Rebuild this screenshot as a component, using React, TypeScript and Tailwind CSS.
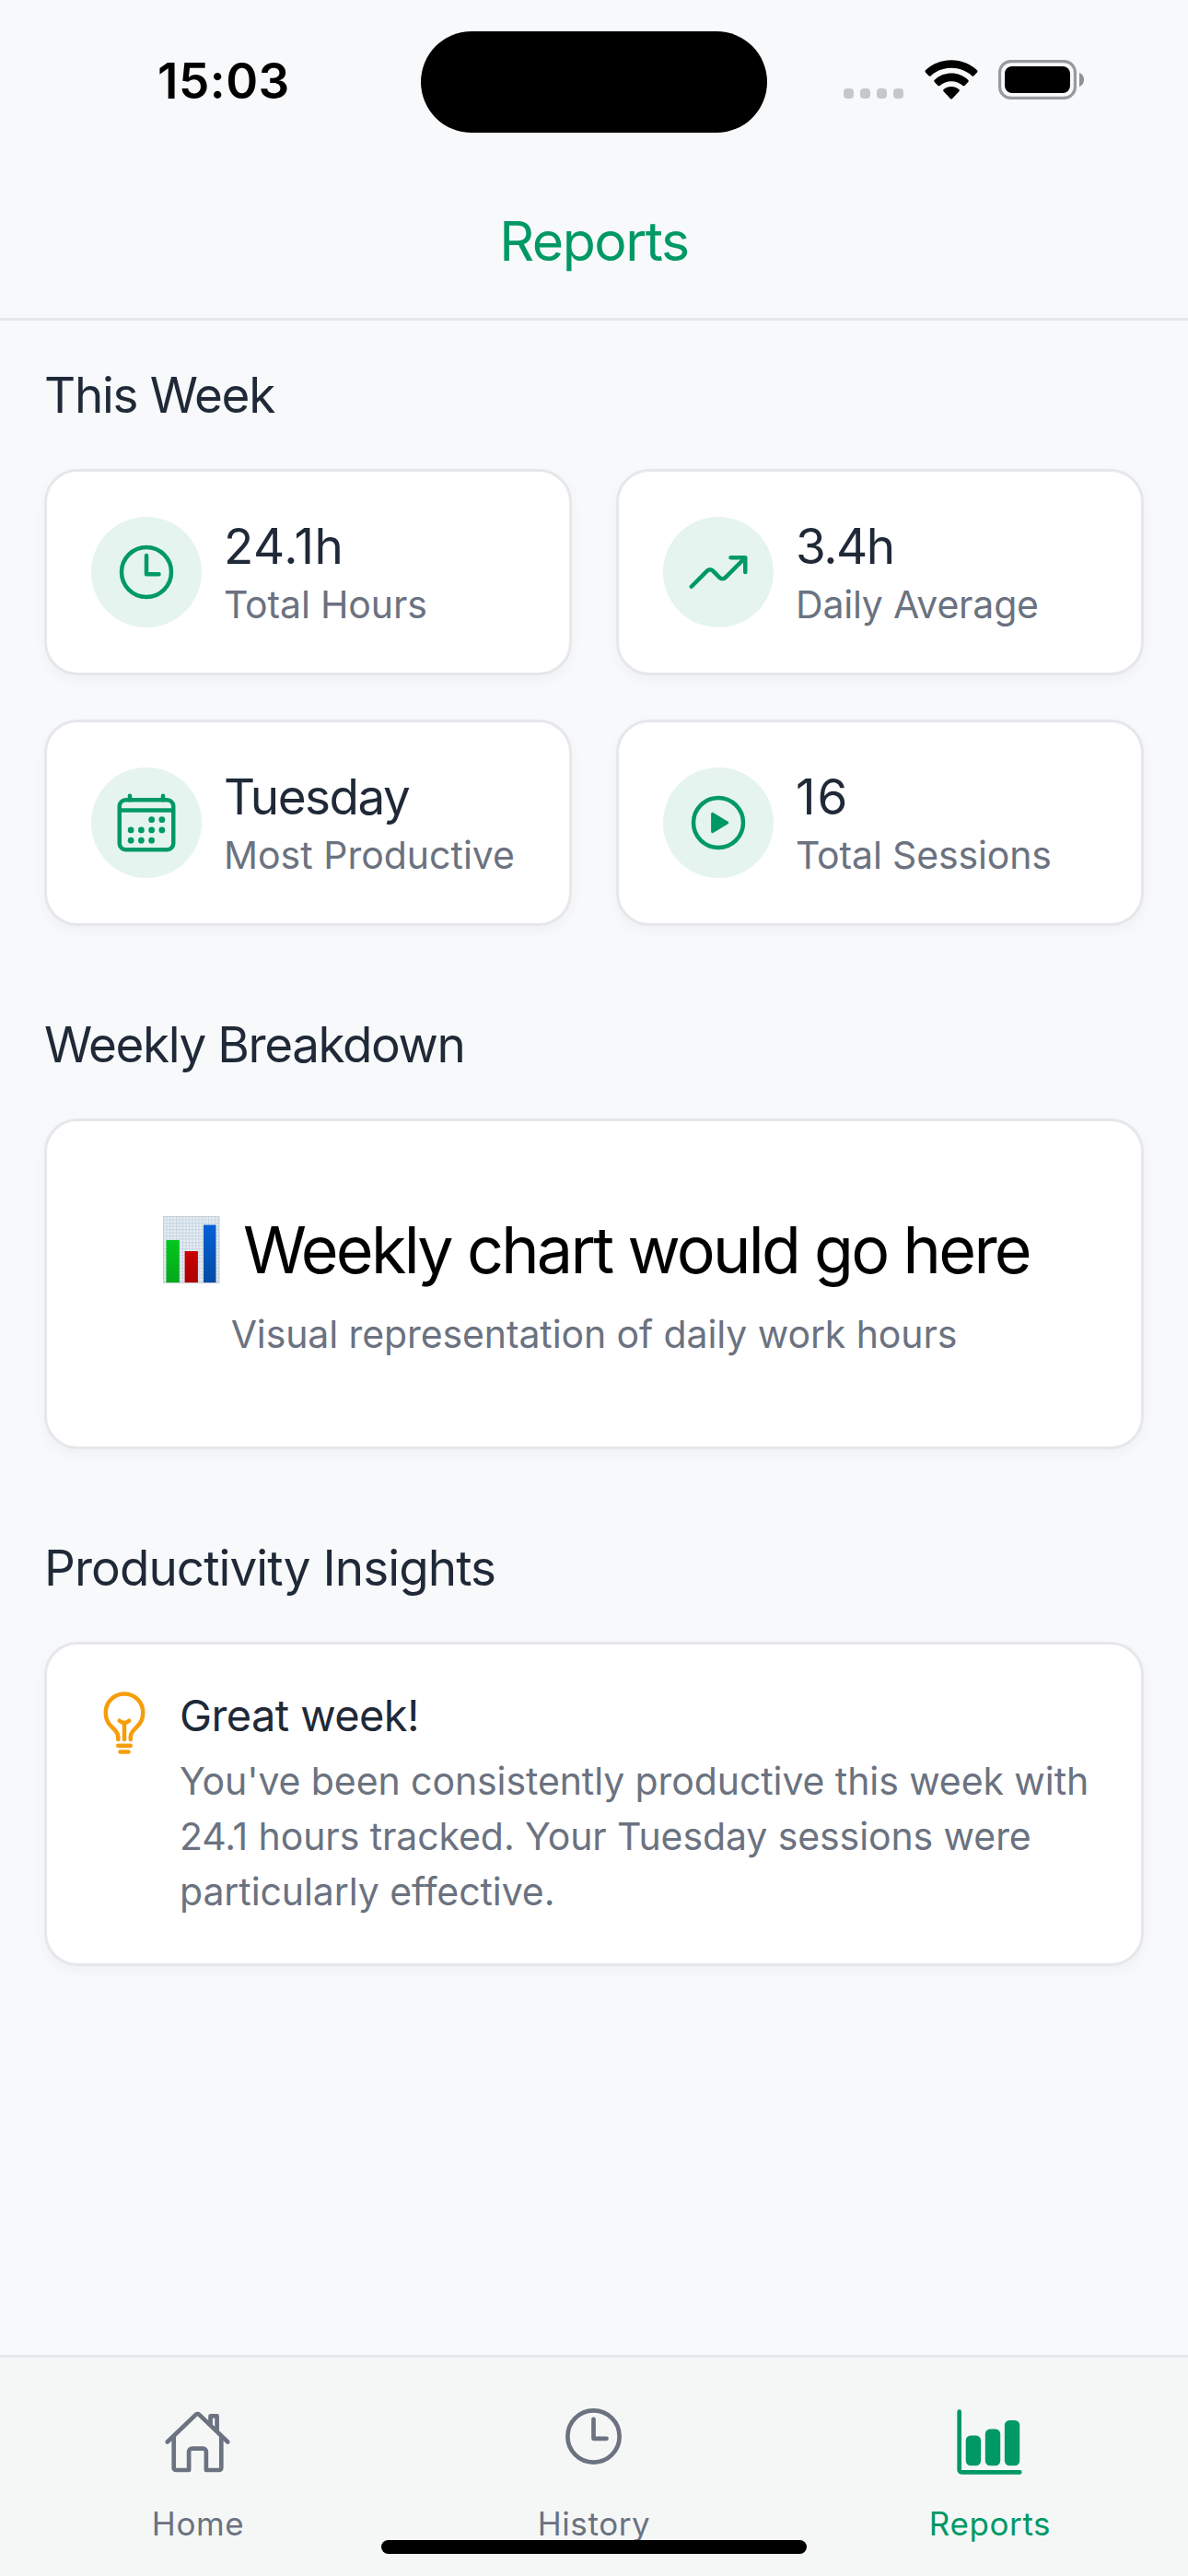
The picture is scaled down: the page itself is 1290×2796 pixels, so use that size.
import type { ReactNode } from "react";
import type { IconType } from "react-icons";
import {
  IoBarChart,
  IoBulbOutline,
  IoCalendarOutline,
  IoHomeOutline,
  IoPlayCircleOutline,
  IoTimeOutline,
  IoTrendingUpOutline,
} from "react-icons/io5";

const CARD =
  "rounded-[36px] border-[3px] border-[#e5e7eb] bg-white shadow-[0_5px_14px_rgba(0,0,0,0.04)]";

function WifiIcon() {
  return (
    <svg width="58" height="43" viewBox="0 0 58 43" fill="#000">
      <path d="M29 0.3C40 0.3 50 4.600 57 11.200c.7.700.7 1.500.1 2.200l-3.600 3.900c-.6.600-1.400.600-2 .1C45.500 11.800 37.500 8.800 29 8.800S12.500 11.800 6.500 17.400c-.6.500-1.400.500-2-.1L.9 13.400c-.6-.7-.6-1.500.1-2.200C8 4.600 18 .3 29 .3z" />
      <path d="M29 14.600c7.100 0 13.500 2.700 18.200 7.200.7.700.7 1.500.1 2.200l-3.800 3.900c-.6.600-1.400.6-2 .1C38 25 33.700 23.300 29 23.300S20 25 16.500 28c-.6.500-1.400.5-2-.1L10.700 24c-.6-.7-.6-1.500.1-2.200 4.700-4.500 11.100-7.200 18.200-7.200z" />
      <path d="M29 29c3.200 0 6.100 1.200 8.300 3.100.7.600.7 1.500.1 2.100l-7.300 7.700c-.6.700-1.600.7-2.200 0l-7.300-7.700c-.6-.6-.6-1.500.1-2.100C22.900 30.200 25.800 29 29 29z" />
    </svg>
  );
}

function BatteryIcon() {
  return (
    <svg width="94" height="43" viewBox="0 0 94 43">
      <rect x="1.600" y="1.600" width="81.800" height="39.800" rx="12" fill="none" stroke="#999a9b" strokeWidth="3.200" />
      <rect x="7" y="7" width="71" height="29" rx="8" fill="#000" />
      <path d="M88 14c3 1 5 4 5 7.500S91 28 88 29z" fill="#8f9091" />
    </svg>
  );
}

function StatusBar() {
  return (
    <div className="flex h-[177px] items-start">
      <div className="w-[457px] pl-[171px] pt-[55px] text-[53px] font-semibold leading-[67px] tracking-[0.5px] text-black">
        15:03
      </div>
      <div className="mt-[33.500px] h-[110.500px] w-[376px] rounded-full bg-black" />
      <div className="ml-[83px] flex pt-[65px]">
        <div className="flex gap-[7px] pt-[31px]">
          {[0, 1, 2, 3].map((i) => (
            <div key={i} className="size-[11px] rounded-[4px] bg-[#c6c7c9]" />
          ))}
        </div>
        <div className="ml-[23px]">
          <WifiIcon />
        </div>
        <div className="ml-[22px]">
          <BatteryIcon />
        </div>
      </div>
    </div>
  );
}

function SectionTitle({ children, className }: { children: ReactNode; className: string }) {
  return (
    <h2 className={`h-[113px] whitespace-nowrap text-[53px] font-normal leading-[66px] text-[#1f2937] ${className}`}>
      {children}
    </h2>
  );
}

type Stat = { icon: IconType; value: string; label: string; valueClass: string; labelClass: string };

const STATS: Stat[] = [
  { icon: IoTimeOutline, value: "24.1h", label: "Total Hours", valueClass: "tracking-[0.6px]", labelClass: "tracking-[-0.15px]" },
  { icon: IoTrendingUpOutline, value: "3.4h", label: "Daily Average", valueClass: "tracking-[-1.4px]", labelClass: "tracking-[-0.2px]" },
  { icon: IoCalendarOutline, value: "Tuesday", label: "Most Productive", valueClass: "tracking-[-1.5px]", labelClass: "tracking-[0px]" },
  { icon: IoPlayCircleOutline, value: "16", label: "Total Sessions", valueClass: "tracking-[2px]", labelClass: "tracking-[-0.14px]" },
];

function StatCard({ icon: Icon, value, label, valueClass, labelClass }: Stat) {
  return (
    <div className={`flex h-[224px] items-center gap-6 px-12 ${CARD}`}>
      <div className="flex size-[120px] shrink-0 items-center justify-center rounded-full bg-[#e5f4ef]">
        <Icon className="size-[72px] text-[#009966]" />
      </div>
      <div className="whitespace-nowrap">
        <div className={`text-[53px] leading-[70px] text-[#1f2937] ${valueClass}`}>{value}</div>
        <div className={`text-[41px] leading-[56px] text-[#6b7280] ${labelClass}`}>{label}</div>
      </div>
    </div>
  );
}

function ChartEmoji() {
  return (
    <svg width="62" height="73" viewBox="0 0 62 73" className="mt-[6px] shrink-0">
      <defs>
        <pattern id="grid" width="3.500" height="3.500" patternUnits="userSpaceOnUse">
          <rect width="3.500" height="3.500" fill="#e9eff4" />
          <path d="M0 .5H3.500M.5 0V3.500" stroke="#c6d6e2" strokeWidth="1" />
        </pattern>
        <linearGradient id="green" x1="0" y1="0" x2="0" y2="1">
          <stop offset="0" stopColor="#02c81c" />
          <stop offset="1" stopColor="#05a81c" />
        </linearGradient>
        <linearGradient id="red" x1="0" y1="0" x2="0" y2="1">
          <stop offset="0" stopColor="#c90000" />
          <stop offset="1" stopColor="#ac0000" />
        </linearGradient>
        <linearGradient id="blue" x1="0" y1="0" x2="0" y2="1">
          <stop offset="0" stopColor="#0560d6" />
          <stop offset="1" stopColor="#044ba3" />
        </linearGradient>
      </defs>
      <rect x="0.500" y="0.500" width="60.500" height="72" fill="url(#grid)" stroke="#c9ced2" strokeWidth="1" />
      <rect x="3.500" y="26" width="14.300" height="46" fill="url(#green)" />
      <rect x="23.600" y="38" width="14.300" height="34" fill="url(#red)" />
      <rect x="44" y="9.500" width="13.500" height="62.500" fill="url(#blue)" />
    </svg>
  );
}

function Tab({
  icon: Icon,
  label,
  className,
  iconClass,
}: {
  icon: IconType;
  label: string;
  className: string;
  iconClass: string;
}) {
  return (
    <div className={`flex flex-1 flex-col items-center pt-[54px] ${className}`}>
      <Icon className={`mr-[2px] size-[75px] ${iconClass}`} />
      <span className="mt-[27px] text-[35px] leading-[48px] tracking-[0.6px]">{label}</span>
    </div>
  );
}

export default function App() {
  return (
    <div className="relative flex h-[2796px] w-[1290px] flex-col overflow-hidden bg-[#f8f9fb] font-['Inter',sans-serif]">
      <StatusBar />
      <header className="flex h-[171px] justify-center border-b-[3px] border-[#e5e7eb] pt-[50px]">
        <h1 className="text-[59px] font-normal leading-[70px] tracking-[-1.5px] text-[#009966]">Reports</h1>
      </header>

      <main className="flex-1 px-12 pt-12">
        <SectionTitle className="tracking-[-1.3px]">This Week</SectionTitle>
        <div className="grid grid-cols-2 gap-12">
          {STATS.map((s) => (
            <StatCard key={s.label} {...s} />
          ))}
        </div>

        <div className="pt-24">
          <SectionTitle className="tracking-[-1.42px]">Weekly Breakdown</SectionTitle>
          <div className={`h-[359px] pt-[97px] ${CARD}`}>
            <div className="flex justify-center whitespace-nowrap pl-[5px]">
              <ChartEmoji />
              <span className="ml-[25px] text-[70px] leading-[86px] tracking-[-2.7px] text-black">
                Weekly chart would go here
              </span>
            </div>
            <div className="mt-[18px] text-center text-[41px] leading-[60px] tracking-[-0.1px] text-[#6b7280]">
              Visual representation of daily work hours
            </div>
          </div>
        </div>

        <div className="pt-24">
          <SectionTitle className="tracking-[-0.93px]">Productivity Insights</SectionTitle>
          <div className={`flex h-[352px] gap-6 px-12 pt-12 ${CARD}`}>
            <IoBulbOutline className="mt-px size-[72px] shrink-0 text-[#f59e0b]" />
            <div className="whitespace-nowrap">
              <div className="text-[47px] leading-[58px] tracking-[-0.6px] text-[#1f2937]">Great week!</div>
              <p className="mt-3 text-[41px] leading-[60px] tracking-[-0.09px] text-[#6b7280]">
                You've been consistently productive this week with
                <br />
                24.1 hours tracked. Your Tuesday sessions were
                <br />
                particularly effective.
              </p>
            </div>
          </div>
        </div>
      </main>

      <nav className="flex h-[240px] border-t-[3px] border-[#e5e7eb] bg-[#f5f7f6]">
        <Tab icon={IoHomeOutline} label="Home" className="text-[#6b7280]" iconClass="" />
        <Tab icon={IoTimeOutline} label="History" className="text-[#6b7280]" iconClass="-translate-y-[6px]" />
        <Tab icon={IoBarChart} label="Reports" className="text-[#009966]" iconClass="" />
      </nav>
      <div className="absolute bottom-6 left-[414px] h-[15px] w-[462px] rounded-full bg-black" />
    </div>
  );
}
